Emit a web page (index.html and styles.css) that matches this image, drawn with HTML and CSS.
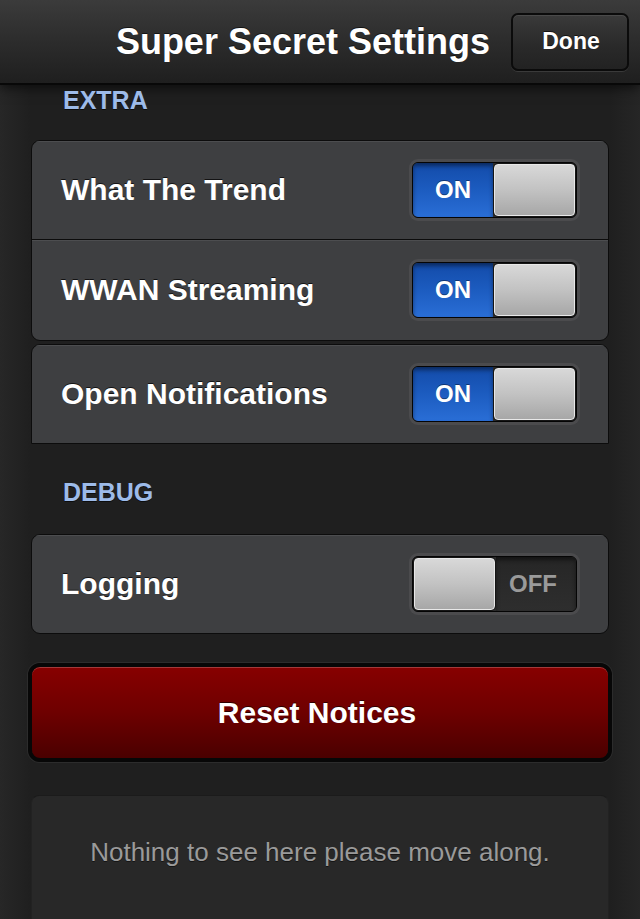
FILE: index.html
```html
<!DOCTYPE html>
<html lang="en">
<head>
<meta charset="utf-8">
<title>Super Secret Settings</title>
<link rel="stylesheet" href="styles.css">
</head>
<body>
<header class="navbar">
  <h1 class="nav-title">Super Secret Settings</h1>
  <button class="nav-done">Done</button>
</header>
<main class="content">
  <div class="section-label section-extra">EXTRA</div>
  <div class="group">
    <div class="row">
      <span class="row-label">What The Trend</span>
      <div class="switch"><div class="track"><span class="on-part">ON</span><span class="thumb"></span></div></div>
    </div>
    <div class="row row-divided">
      <span class="row-label">WWAN Streaming</span>
      <div class="switch"><div class="track"><span class="on-part">ON</span><span class="thumb"></span></div></div>
    </div>
  </div>
  <div class="group group-cut">
    <div class="row">
      <span class="row-label">Open Notifications</span>
      <div class="switch"><div class="track"><span class="on-part">ON</span><span class="thumb"></span></div></div>
    </div>
  </div>
  <div class="section-label section-debug">DEBUG</div>
  <div class="group">
    <div class="row">
      <span class="row-label">Logging</span>
      <div class="switch"><div class="track"><span class="thumb"></span><span class="off-part">OFF</span></div></div>
    </div>
  </div>
  <button class="reset">Reset Notices</button>
  <div class="footer-box">Nothing to see here please move along.</div>
</main>
</body>
</html>
```
FILE: styles.css
```css
html, body {
  margin: 0;
  padding: 0;
  height: 919px;
  overflow: hidden;
}
body {
  background: linear-gradient(to right, #272727 0px, #1f1f1f 30px, #1f1f1f 610px, #262626 640px);
  font-family: "Liberation Sans", Arial, sans-serif;
  color: #fff;
}
.navbar {
  height: 83px;
  display: flex;
  align-items: center;
  justify-content: flex-end;
  gap: 21px;
  padding-right: 11px;
  background: linear-gradient(#3b3b3b, #2c2c2c 50%, #1f1f1f);
  border-bottom: 2px solid #080808;
  box-shadow: 0 2px 12px rgba(0,0,0,0.7);
}
.nav-title {
  margin: 0;
  font-size: 36px;
  font-weight: bold;
  line-height: 40px;
  color: #fff;
  text-shadow: 0 -1px 0 rgba(0,0,0,0.6);
}
.nav-done {
  width: 118px;
  height: 58px;
  box-sizing: border-box;
  border: 2px solid #0b0b0b;
  border-radius: 7px;
  background: linear-gradient(#3a3a3a, #2a2a2a 55%, #222);
  box-shadow: inset 0 1px 0 #4a4a4a, 0 1px 0 #3a3a3a;
  color: #fff;
  font-family: "Liberation Sans", Arial, sans-serif;
  font-size: 23px;
  font-weight: bold;
  text-shadow: 0 -1px 0 rgba(0,0,0,0.6);
  padding: 0 0 0 2px;
}
.content {
  padding: 0 31px;
}
.section-label {
  font-size: 25px;
  line-height: 25px;
  font-weight: bold;
  color: #9dbbe9;
  padding-left: 32px;
  text-shadow: 0 1px 0 rgba(0,0,0,0.6);
}
.section-extra {
  margin-top: 3px;
  margin-bottom: 27px;
}
.section-debug {
  margin-top: 36px;
  margin-bottom: 29px;
}
.group {
  background: #3e3f41;
  border: 1px solid #0c0c0c;
  border-radius: 9px;
  overflow: hidden;
}
.group-cut {
  margin-top: 3px;
  border-bottom-left-radius: 0;
  border-bottom-right-radius: 0;
}
.row {
  height: 98px;
  display: flex;
  align-items: center;
  justify-content: space-between;
  padding: 0 28px 0 29px;
  box-shadow: inset 0 1px 0 #4c4d4f;
}
.row-divided {
  height: 100px;
  border-top: 1px solid #0c0c0c;
}
.row-label {
  font-size: 30px;
  font-weight: bold;
  color: #fff;
  text-shadow: 0 -1px 0 rgba(0,0,0,0.7);
}
.switch {
  width: 171px;
  height: 62px;
  box-sizing: border-box;
  padding: 3px;
  border-radius: 9px;
  background: #4b4b4d;
}
.track {
  height: 100%;
  box-sizing: border-box;
  border: 1px solid #050505;
  border-radius: 6px;
  overflow: hidden;
  display: flex;
  background: #2b2b2b;
}
.on-part, .off-part {
  flex: 1;
  display: flex;
  align-items: center;
  justify-content: center;
  font-size: 24px;
  font-weight: bold;
}
.on-part {
  color: #fff;
  background: linear-gradient(#134ba9, #1c5cc0 50%, #2a6ed6);
  box-shadow: inset 0 3px 4px rgba(0,0,0,0.45);
  text-shadow: 0 -1px 0 rgba(0,0,0,0.4);
}
.off-part {
  color: #9a9a9a;
  background: linear-gradient(#262626, #2e2e2e);
  box-shadow: inset 0 3px 4px rgba(0,0,0,0.5);
  padding-right: 6px;
}
.thumb {
  width: 81px;
  flex: none;
  box-sizing: border-box;
  margin: 1px;
  border: 1px solid #e8e8e8;
  border-radius: 4px;
  background: linear-gradient(#d8d8d8, #c2c2c2 50%, #a7a7a7);
  box-shadow: 0 0 0 1px rgba(0,0,0,0.5);
}
.reset {
  display: block;
  width: 584px;
  height: 99px;
  margin: 29px -3px 0;
  box-sizing: border-box;
  border: 4px solid #070707;
  border-radius: 12px;
  background: linear-gradient(#870000, #6e0000 50%, #4a0000);
  box-shadow: inset 0 1px 0 #a33a3a, 0 0 0 1px #2c2c2c;
  color: #fff;
  font-family: "Liberation Sans", Arial, sans-serif;
  font-size: 30px;
  font-weight: bold;
  text-shadow: 0 -1px 0 rgba(0,0,0,0.6);
  padding: 0 6px 0 0;
}
.footer-box {
  margin-top: 33px;
  height: 160px;
  box-sizing: border-box;
  padding-top: 41px;
  background: #282828;
  border: 1px solid #222;
  border-top-color: #1b1b1b;
  border-radius: 8px;
  text-align: center;
  font-size: 26px;
  line-height: 30px;
  color: #9a9a9a;
  text-shadow: 0 1px 0 rgba(0,0,0,0.5);
}
```
